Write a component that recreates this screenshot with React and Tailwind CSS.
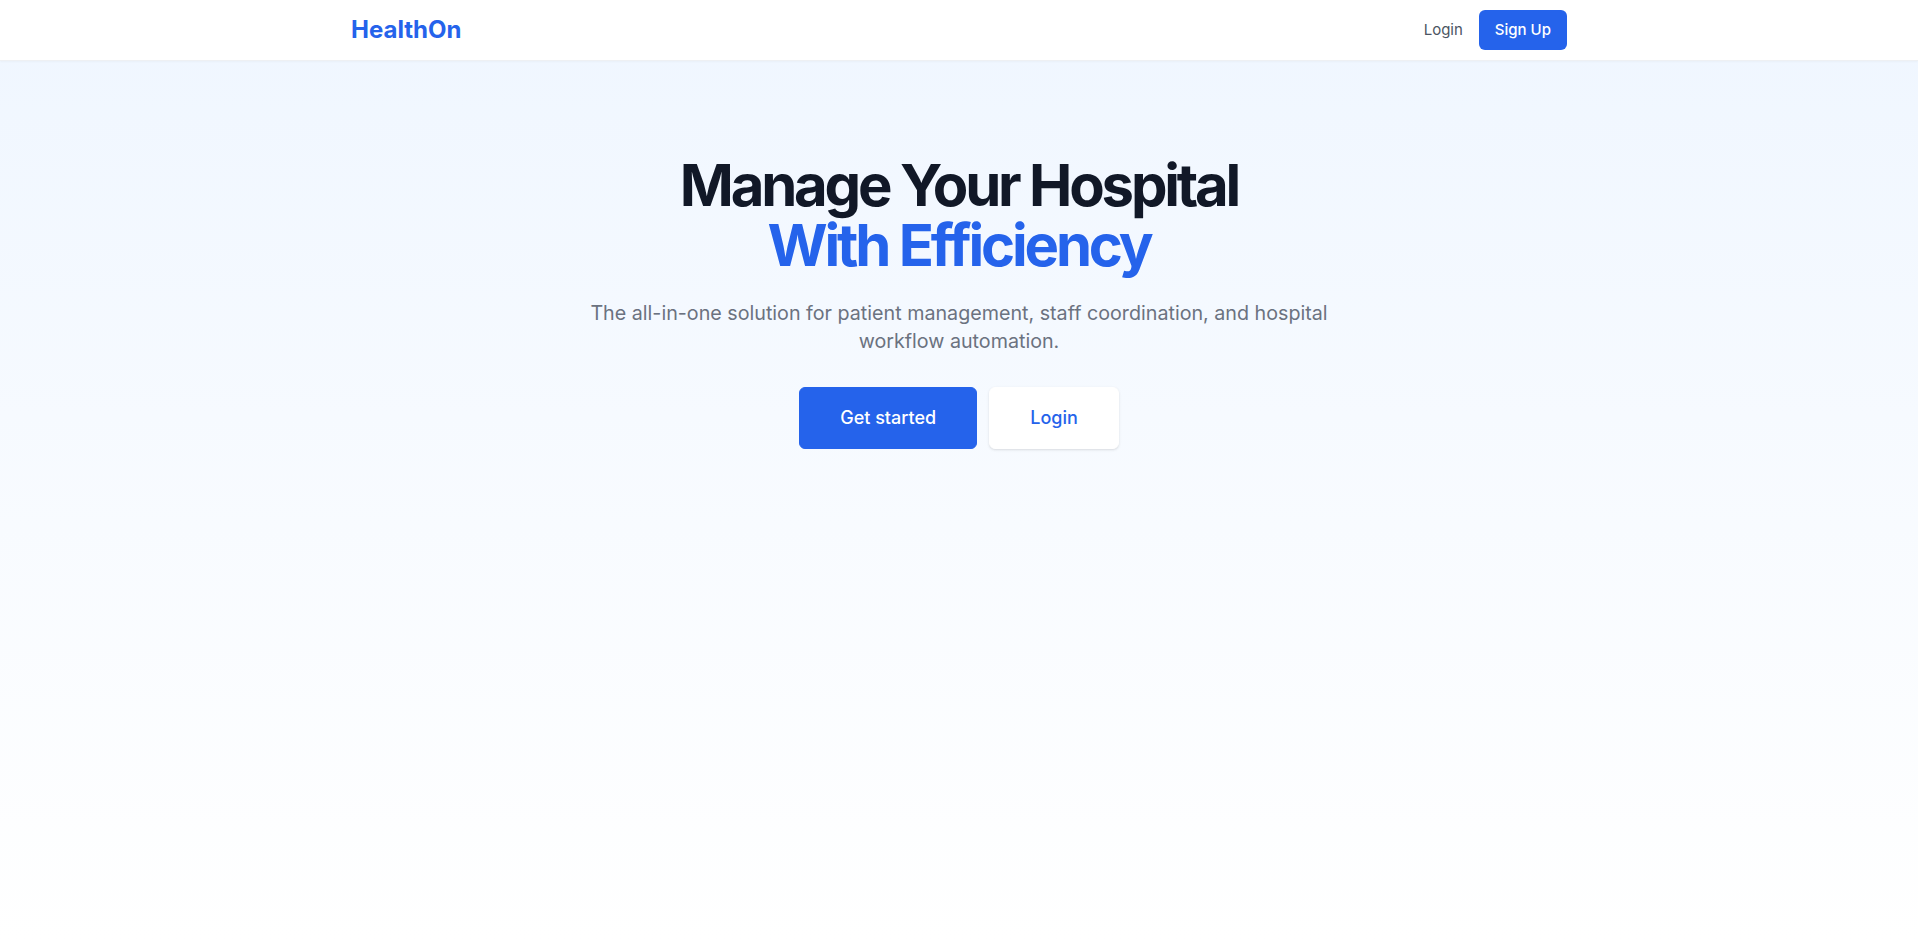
export default function App() {
  return (
    <div
      className="min-h-screen bg-gradient-to-b from-[#eff6ff] to-white text-[#111827]"
      style={{ fontFamily: '"Inter", "Liberation Sans", sans-serif' }}
    >
      {/* Top navigation */}
      <header className="bg-white border-b border-[#eef0f3] shadow-[0_1px_2px_rgba(0,0,0,0.03)]">
        <div className="max-w-7xl mx-auto px-8 h-[60px] flex items-center justify-between">
          <span className="text-2xl font-bold text-[#2563eb]">HealthOn</span>
          <nav className="flex items-center gap-4">
            <button className="text-[15px] text-[#4b5563]">Login</button>
            <button className="h-10 px-4 rounded-md bg-[#2563eb] text-white text-[15px] font-medium">
              Sign Up
            </button>
          </nav>
        </div>
      </header>

      {/* Hero */}
      <main className="max-w-7xl mx-auto px-8 pt-[94px] pb-24 flex flex-col items-center text-center">
        <h1 className="text-[58px] leading-[60px] font-bold tracking-[-0.055em] text-[#111827]">
          Manage Your Hospital
          <br />
          <span className="text-[#2563eb]">With Efficiency</span>
        </h1>
        <p className="mt-6 max-w-3xl text-[19.7px] leading-7 text-[#6b7280]">
          The all-in-one solution for patient management, staff coordination, and hospital
          <br />
          workflow automation.
        </p>
        <div className="mt-8 flex items-center gap-3">
          <button className="px-10 py-4 rounded-md bg-[#2563eb] text-white text-lg leading-7 font-medium border border-[#2563eb]">
            Get started
          </button>
          <button className="px-10 py-4 rounded-md bg-white text-[#2563eb] text-lg leading-7 font-medium border border-white shadow-sm">
            Login
          </button>
        </div>
      </main>
    </div>
  );
}
